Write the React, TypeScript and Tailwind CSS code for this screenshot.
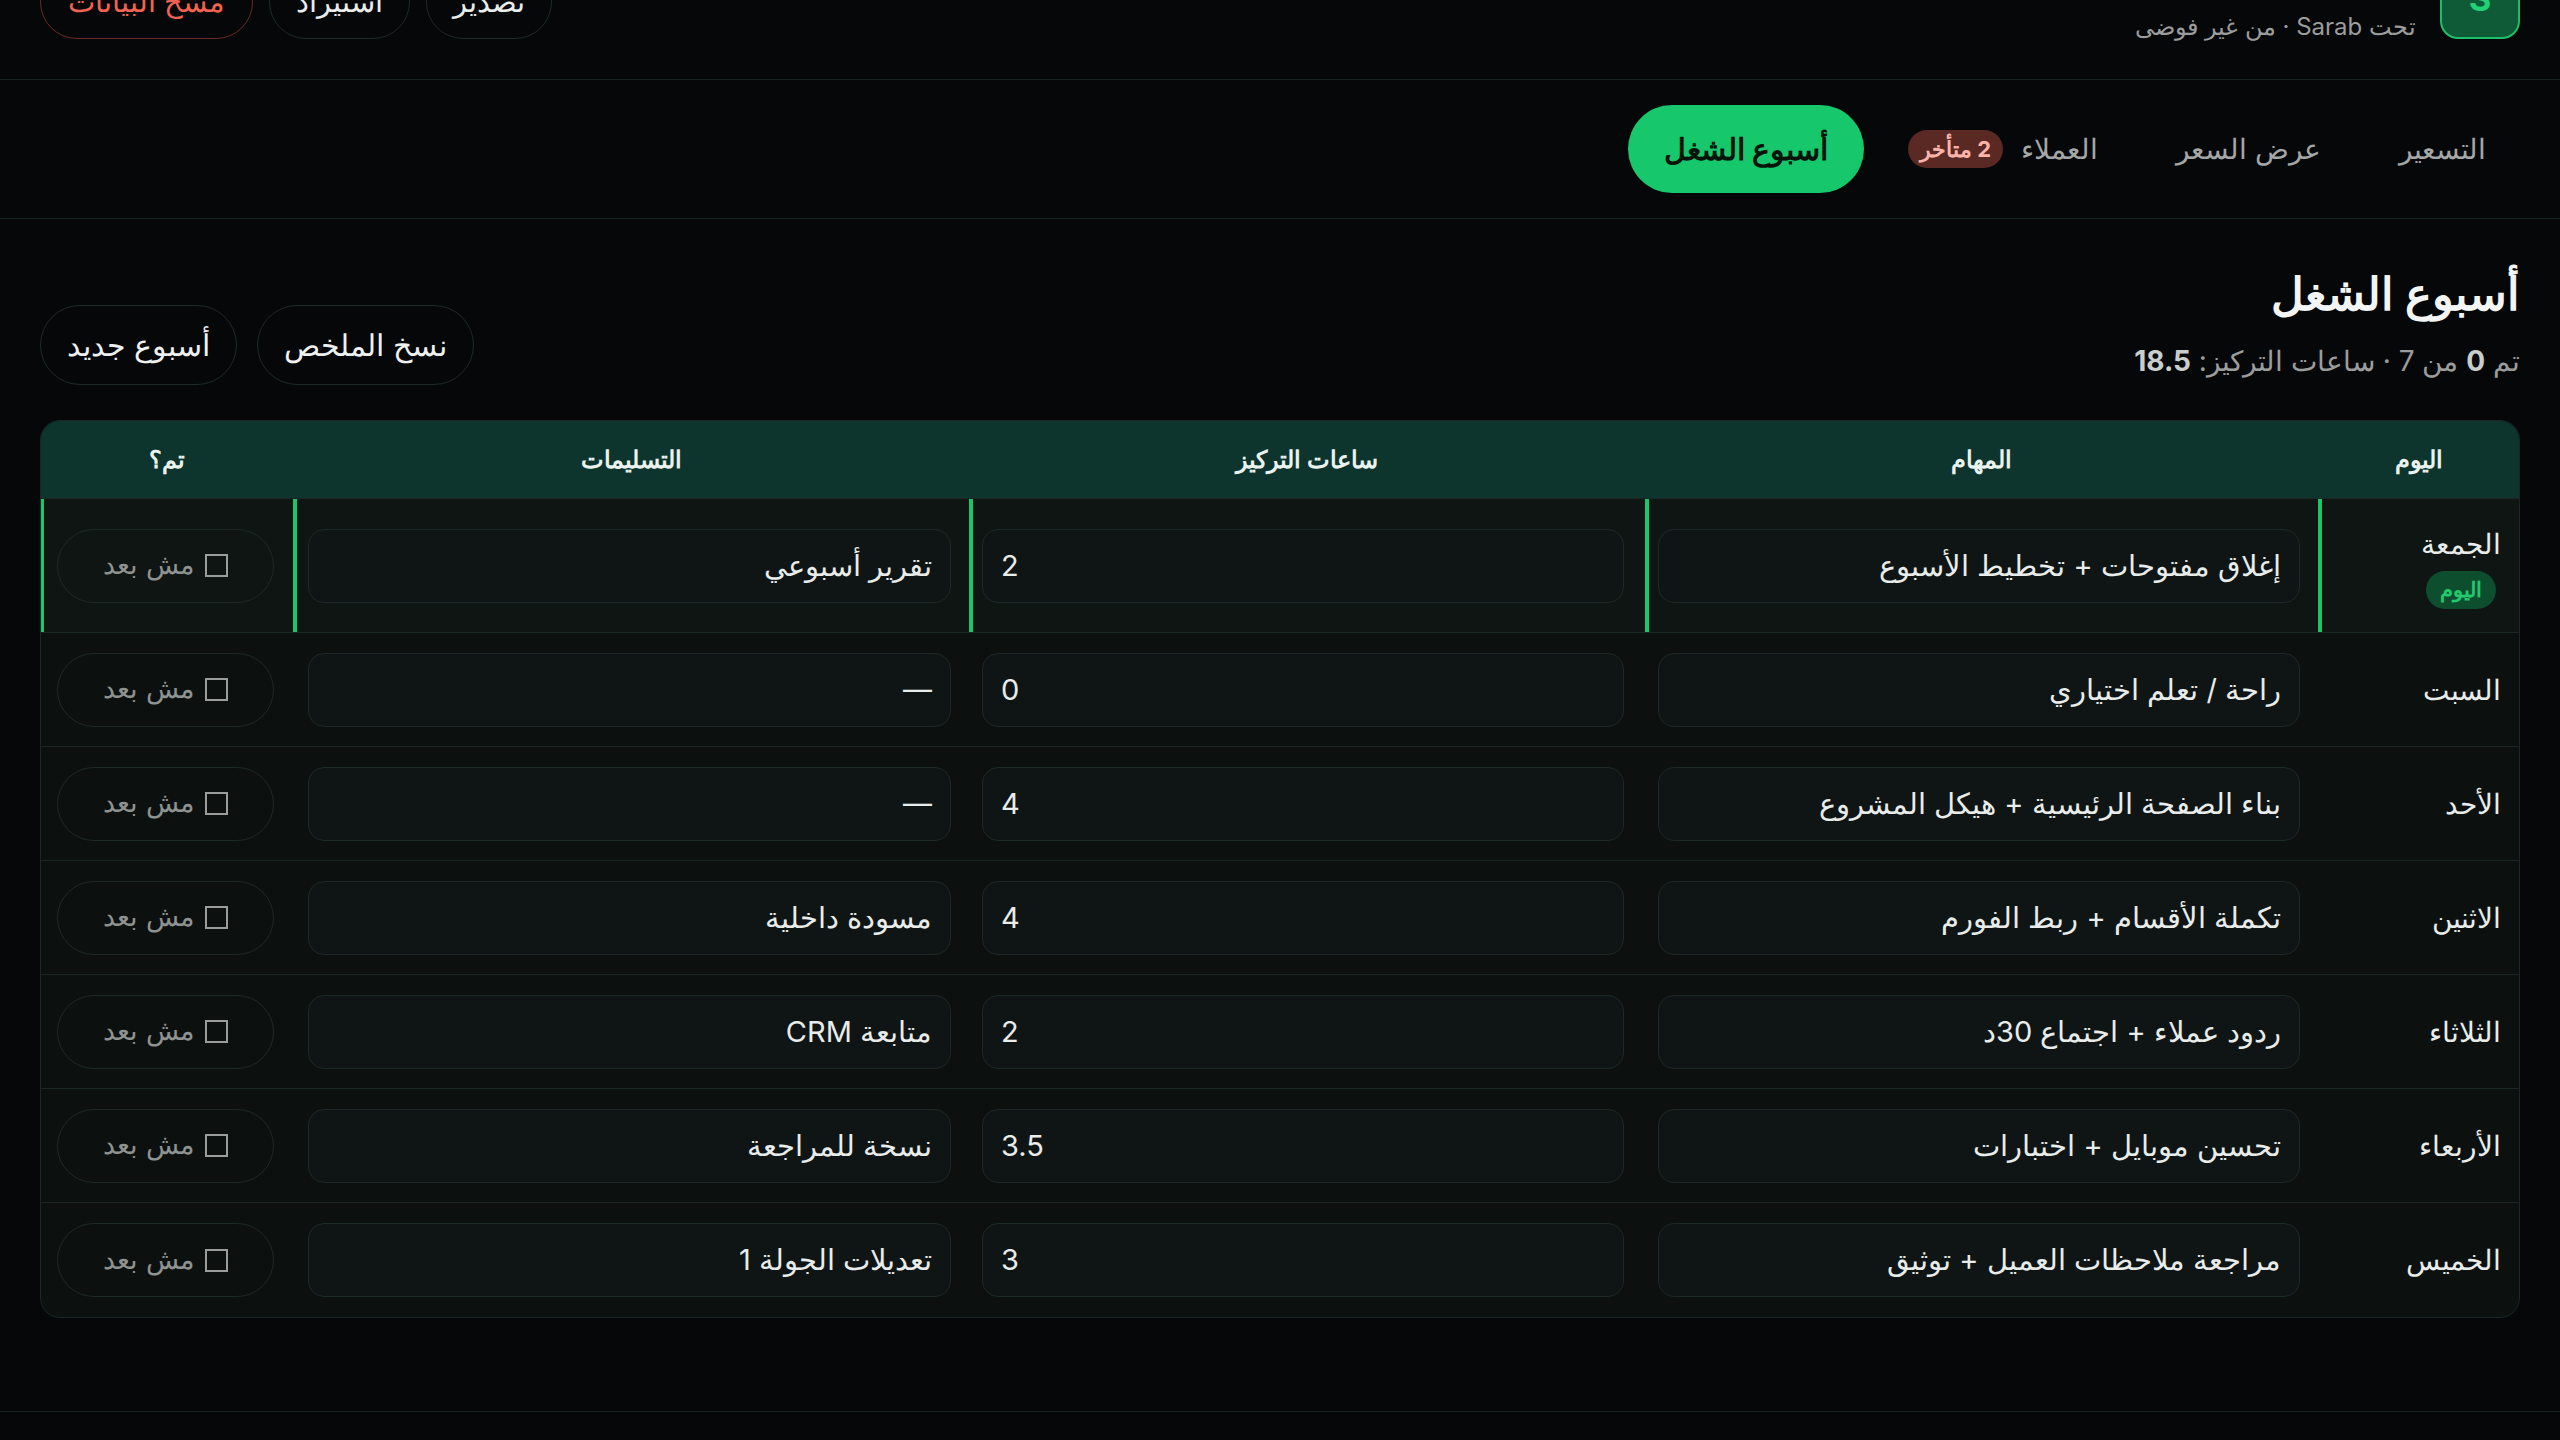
import React from "react";

type Row = {
  day: string;
  task: string;
  hours: string;
  deliverable: string;
  today?: boolean;
};

const rows: Row[] = [
  { day: "الجمعة", task: "إغلاق مفتوحات + تخطيط الأسبوع", hours: "2", deliverable: "تقرير أسبوعي", today: true },
  { day: "السبت", task: "راحة / تعلم اختياري", hours: "0", deliverable: "—" },
  { day: "الأحد", task: "بناء الصفحة الرئيسية + هيكل المشروع", hours: "4", deliverable: "—" },
  { day: "الاثنين", task: "تكملة الأقسام + ربط الفورم", hours: "4", deliverable: "مسودة داخلية" },
  { day: "الثلاثاء", task: "ردود عملاء + اجتماع 30د", hours: "2", deliverable: "متابعة CRM" },
  { day: "الأربعاء", task: "تحسين موبايل + اختبارات", hours: "3.5", deliverable: "نسخة للمراجعة" },
  { day: "الخميس", task: "مراجعة ملاحظات العميل + توثيق", hours: "3", deliverable: "تعديلات الجولة 1" },
];

const gridCols = "grid grid-cols-[201px_673px_676px_676px_253px]";

function Field({ value, ltr }: { value: string; ltr?: boolean }) {
  return (
    <div
      dir={ltr ? "ltr" : "rtl"}
      className="flex h-[74px] w-full items-center rounded-[16px] border border-[#1d2926] bg-[#0f1514] px-[18px] text-[29px] text-[#e8ecea]"
    >
      {value}
    </div>
  );
}

export default function App() {
  return (
    <div
      dir="rtl"
      className="min-h-screen overflow-hidden bg-[#060709] text-white"
      style={{ fontFamily: "Inter, 'Noto Sans', sans-serif" }}
    >
      <div className="-mt-[82px]">
        {/* Header */}
        <header className="flex h-[162px] items-center justify-between border-b border-[#15241f] px-[40px]">
          <div className="flex items-center gap-[24px]">
            <div className="flex h-[80px] w-[80px] items-center justify-center rounded-[18px] border-2 border-[#1fbf69] bg-[#0f5a37] text-[34px] font-bold text-[#22d173]">
              S
            </div>
            <div className="flex flex-col gap-[8px] pt-[4px]">
              <div className="text-[30px] font-bold text-[#f1f3f2]">سراب</div>
              <div className="text-[24px] text-[#9a9d9c]">تحت Sarab · من غير فوضى</div>
            </div>
          </div>
          <div className="flex items-center gap-[16px] pt-[6px]">
            <button className="h-[74px] rounded-full border border-[#1c2b27] px-[26px] text-[29px] text-[#e8ecea]">تصدير</button>
            <button className="h-[74px] rounded-full border border-[#1c2b27] px-[26px] text-[29px] text-[#e8ecea]">استيراد</button>
            <button className="h-[74px] rounded-full border border-[#6b2a25] px-[27px] text-[29px] text-[#f06352]">مسح البيانات</button>
          </div>
        </header>

        {/* Nav */}
        <nav className="flex h-[139px] items-center gap-[10px] border-b border-[#15241f] px-[40px]">
          <button className="flex h-[88px] items-center px-[34px] text-[28px] text-[#a4a7a6]">التسعير</button>
          <button className="flex h-[88px] items-center px-[34px] text-[28px] text-[#a4a7a6]">عرض السعر</button>
          <button className="flex h-[88px] items-center gap-[18px] px-[34px] text-[28px] text-[#a4a7a6]">
            <span>العملاء</span>
            <span className="flex h-[38px] items-center rounded-full bg-[#5b2923] px-[12px] text-[22px] font-bold text-[#fbb4aa]">2 متأخر</span>
          </button>
          <button className="flex h-[88px] items-center rounded-full bg-[#17c76c] px-[36px] text-[30px] font-bold text-[#03140b]">
            أسبوع الشغل
          </button>
        </nav>

        {/* Main */}
        <main className="px-[40px] pb-[93px] pt-[47px]">
          <div className="flex items-end justify-between">
            <div className="flex flex-col">
              <h1 className="text-[45px] font-bold leading-[56px] text-[#f3f5f4]">أسبوع الشغل</h1>
              <p className="mt-[15px] text-[28px] leading-[48px] text-[#9a9d9c]">
                تم <b className="text-[#c9cdcb]">0</b> من 7 · ساعات التركيز: <b className="text-[#c9cdcb]">18.5</b>
              </p>
            </div>
            <div className="flex items-center gap-[20px]">
              <button className="h-[80px] rounded-full border border-[#1c2b27] px-[26px] text-[30px] text-[#eef1ef]">نسخ الملخص</button>
              <button className="h-[80px] rounded-full border border-[#1c2b27] px-[26px] text-[30px] text-[#eef1ef]">أسبوع جديد</button>
            </div>
          </div>

          <div className="mt-[35px] overflow-hidden rounded-[20px] border border-[#1a2724] bg-[#0c1110]">
            <div className={`${gridCols} h-[78px] items-center border-b border-[#1a2724] bg-[#0e352d] text-[24px] font-bold text-[#e9f2ee]`}>
              <div className="text-center">اليوم</div>
              <div className="text-center">المهام</div>
              <div className="text-center">ساعات التركيز</div>
              <div className="text-center">التسليمات</div>
              <div className="text-center">تم؟</div>
            </div>
            {rows.map((r, i) => {
              const bar = r.today ? "shadow-[inset_4px_0_0_#17c76c]" : "";
              return (
                <div
                  key={r.day}
                  className={`${gridCols} ${r.today ? "h-[134px] bg-[#0e1513]" : "h-[114px]"} ${i < rows.length - 1 ? "border-b border-[#1a2724]" : ""}`}
                >
                  <div className={`flex items-center ps-[18px] pe-[14px] ${bar}`}>
                    {r.today ? (
                      <div className="flex flex-col items-center gap-[6px]">
                        <span className="text-[28px] text-[#e8ecea]">{r.day}</span>
                        <span className="flex h-[38px] items-center rounded-full bg-[#0d4e2f] px-[14px] text-[21px] font-bold text-[#22c86e]">اليوم</span>
                      </div>
                    ) : (
                      <span className="text-[28px] text-[#e8ecea]">{r.day}</span>
                    )}
                  </div>
                  <div className={`flex items-center ps-[18px] pe-[13px] ${bar}`}>
                    <Field value={r.task} />
                  </div>
                  <div className={`flex items-center ps-[21px] pe-[13px] ${bar}`}>
                    <Field value={r.hours} ltr />
                  </div>
                  <div className={`flex items-center ps-[18px] pe-[15px] ${bar}`}>
                    <Field value={r.deliverable} />
                  </div>
                  <div className={`flex items-center ps-[19px] pe-[17px] ${bar}`}>
                    <button className="flex h-[74px] w-full items-center justify-center gap-[11px] rounded-full border border-[#1d2926] text-[27px] text-[#8e9290]">
                      <span className="inline-block h-[23px] w-[23px] border-2 border-[#9a9d9c]" />
                      <span>مش بعد</span>
                    </button>
                  </div>
                </div>
              );
            })}
          </div>
        </main>

        <footer className="h-[120px] border-t border-[#15241f]" />
      </div>
    </div>
  );
}
